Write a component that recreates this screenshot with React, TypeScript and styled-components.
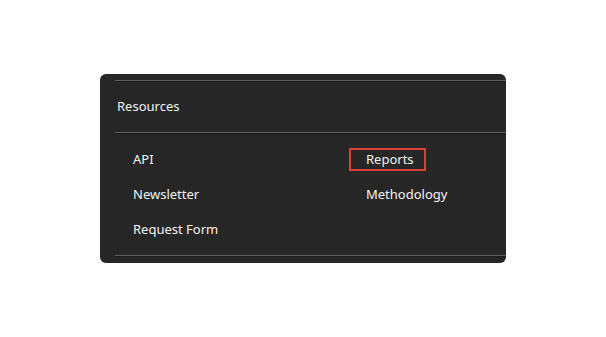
import React from "react";
import styled, { createGlobalStyle } from "styled-components";

const GlobalStyle = createGlobalStyle`
  html, body {
    margin: 0;
    background: #ffffff;
  }
  body {
    font-family: "Segoe UI", "Noto Sans", "Liberation Sans", sans-serif;
  }
`;

const Page = styled.div`
  padding: 74px 0 0 100px;
`;

const Panel = styled.section`
  width: 406px;
  box-sizing: border-box;
  background: #262626;
  border-radius: 6px;
  padding: 6px 0 7px 15px;
  color: #f2f2f2;
`;

const Rule = styled.div`
  height: 1px;
  background: #5e5e5e;
  box-shadow: 0 1px 0 #1c1c1c;
`;

const Title = styled.div`
  height: 51px;
  display: flex;
  align-items: center;
  padding: 0 0 1px 2px;
  box-sizing: border-box;
  font-size: 13px;
`;

const LinkGrid = styled.ul`
  list-style: none;
  margin: 0;
  padding: 8px 0 9px 18px;
  display: grid;
  grid-template-columns: 233px 1fr;
  grid-auto-rows: 35px;
`;

const LinkItem = styled.li<{ $highlight?: boolean }>`
  position: relative;
  display: flex;
  align-items: center;
  font-size: 13px;
  color: #f4f4f4;

  ${({ $highlight }) =>
    $highlight &&
    `
    &::before {
      content: "";
      position: absolute;
      left: -17px;
      top: 7px;
      width: 77px;
      height: 23px;
      box-sizing: border-box;
      border: 2px solid #d8403a;
    }
  `}
`;

const links = [
  { label: "API" },
  { label: "Reports", highlight: true },
  { label: "Newsletter" },
  { label: "Methodology" },
  { label: "Request Form" },
];

export default function App() {
  return (
    <>
      <GlobalStyle />
      <Page>
        <Panel>
          <Rule />
          <Title>Resources</Title>
          <Rule />
          <LinkGrid>
            {links.map((l) => (
              <LinkItem key={l.label} $highlight={l.highlight}>
                {l.label}
              </LinkItem>
            ))}
          </LinkGrid>
          <Rule />
        </Panel>
      </Page>
    </>
  );
}
